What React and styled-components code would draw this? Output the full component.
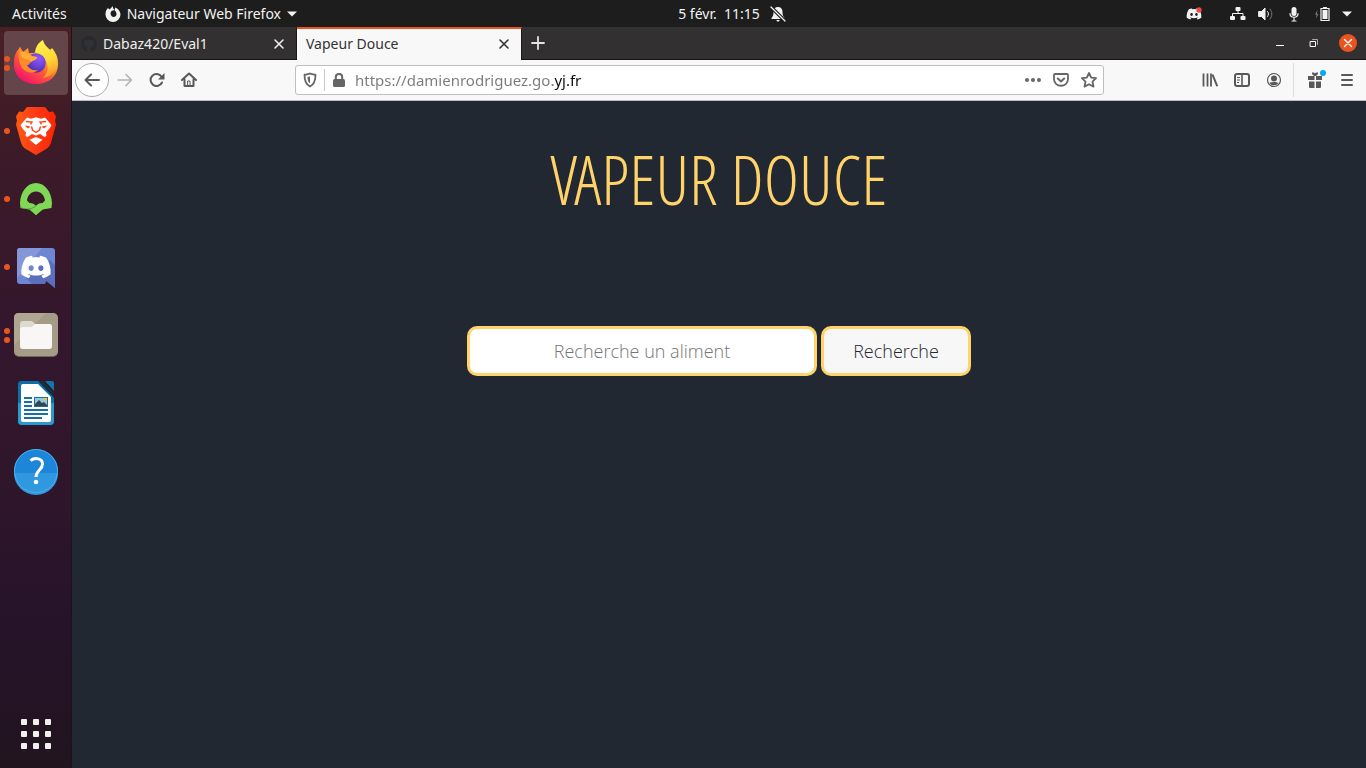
import React from "react";
import styled, { createGlobalStyle } from "styled-components";
import { FaGithub, FaDiscord } from "react-icons/fa";

const GlobalStyle = createGlobalStyle`
  * { box-sizing: border-box; }
  body { margin: 0; background: #222831; }
  body, button, input { font-family: "Noto Sans", "Open Sans", sans-serif; font-size: 14px; }
  button { border: 0; padding: 0; margin: 0; background: none; color: inherit; cursor: pointer; }
  svg { display: block; flex: none; }
`;

const Desktop = styled.div`
  display: flex;
  flex-direction: column;
  min-height: 100vh;
`;

/* ---------- system bar ---------- */
const TopBar = styled.header`
  display: grid;
  grid-template-columns: 1fr auto 1fr;
  align-items: center;
  height: 27px;
  background: #1d1d1d;
  color: #f2f2f2;
`;
const BarSide = styled.div`
  display: flex;
  align-items: center;
  gap: ${(p) => p.$gap}px;
  justify-content: ${(p) => (p.$end ? "flex-end" : "flex-start")};
  padding: 0 ${(p) => (p.$end ? 14 : 12)}px;
`;
const BarButton = styled.button`
  display: flex;
  align-items: center;
  gap: 6px;
  line-height: 27px;
  white-space: nowrap;
`;
const Clock = styled(BarButton)`
  gap: 10px;
  padding-left: 98px;
`;
const Tray = styled.span`
  margin-right: 16px;
`;

/* ---------- dock ---------- */
const Workspace = styled.div`
  display: flex;
  flex: 1;
`;
const Dock = styled.nav`
  display: flex;
  flex-direction: column;
  gap: 4px;
  flex: none;
  width: 72px;
  padding: 4px 3px 2px 4px;
  border-right: 1px solid #1a1420;
  background: linear-gradient(#4a1f24 0, #3c1a28 18%, #34172e 40%, #30162b 60%, #26132a 80%, #22141f 100%);
`;
const DockItem = styled.button`
  position: relative;
  display: flex;
  align-items: center;
  justify-content: center;
  width: 64px;
  height: 64px;
  border-radius: 4px;
  background: ${(p) => (p.$active ? "#644549" : "transparent")};
  margin-top: ${(p) => (p.$last ? "auto" : "0")};
`;
const Dots = styled.span`
  position: absolute;
  left: 0;
  top: 0;
  bottom: 0;
  display: flex;
  flex-direction: column;
  justify-content: center;
  gap: 3px;
`;
const Dot = styled.i`
  width: 6px;
  height: 6px;
  border-radius: 50%;
  background: #e95420;
`;

/* ---------- browser window ---------- */
const Browser = styled.div`
  display: flex;
  flex-direction: column;
  flex: 1;
  min-width: 0;
`;
const TabStrip = styled.div`
  display: flex;
  align-items: stretch;
  height: 33px;
  background: #333031;
  border-bottom: 1px solid #141414;
`;
const Tab = styled.div`
  display: flex;
  align-items: center;
  flex: none;
  width: 225px;
  height: ${(p) => (p.$active ? 33 : 32)}px;
  padding: 0 8px ${(p) => (p.$active ? 2 : 0)}px 9px;
  gap: 6px;
  border-top: 2px solid ${(p) => (p.$active ? "#e95420" : "#333031")};
  border-right: 1px solid #1a1a1a;
  background: ${(p) => (p.$active ? "#f8f8f8" : "#333031")};
  color: ${(p) => (p.$active ? "#333" : "#eee")};
`;
const TabTitle = styled.span`
  flex: 1;
  line-height: 20px;
  white-space: nowrap;
`;
const TabClose = styled.button`
  display: flex;
  align-items: center;
  justify-content: center;
  width: 18px;
  height: 20px;
`;
const NewTab = styled.button`
  display: flex;
  align-items: center;
  justify-content: center;
  width: 32px;
  color: #e4e4e4;
`;
const WindowButtons = styled.div`
  display: flex;
  align-items: center;
  gap: 16px;
  margin-left: auto;
  padding-right: 9px;
`;
const WindowButton = styled.button`
  display: flex;
  align-items: center;
  justify-content: center;
  width: 18px;
  height: 18px;
  border-radius: 50%;
  color: #fff;
  background: ${(p) => (p.$close ? "#e95420" : "transparent")};
`;
const Toolbar = styled.div`
  display: flex;
  align-items: center;
  height: 41px;
  padding: 0 3px;
  background: #f8f8f8;
  border-bottom: 1px solid #bdbdbf;
  color: #58585a;
`;
const ToolButton = styled.button`
  display: flex;
  align-items: center;
  justify-content: center;
  width: ${(p) => (p.$round ? 34 : 32)}px;
  height: ${(p) => (p.$round ? 34 : 32)}px;
  color: ${(p) => (p.$faded ? "#b3b3b3" : "inherit")};
  border: ${(p) => (p.$round ? "1px solid #acacac" : "0")};
  border-radius: ${(p) => (p.$round ? "50%" : "2px")};
  background: ${(p) => (p.$round ? "#fff" : "transparent")};
`;
const Divider = styled.span`
  width: 1px;
  height: 34px;
  margin: 0 5px 0 3px;
  background: #dcdcdc;
`;
const AddressBar = styled.div`
  display: flex;
  align-items: center;
  flex: 1;
  min-width: 0;
  height: 30px;
  margin: 0 90px;
  padding-left: 6px;
  border: 1px solid #bebebe;
  border-radius: 3px;
  background: #fff;
  color: #666;
`;
const AddressDivider = styled.span`
  width: 1px;
  height: 22px;
  margin: 0 6px;
  background: #c9c9c9;
`;
const AddressButton = styled.button`
  display: flex;
  align-items: center;
  justify-content: center;
  width: ${(p) => (p.$narrow ? 16 : 28)}px;
  height: 28px;
`;
const AddressInput = styled.input`
  flex: 1;
  min-width: 0;
  height: 28px;
  margin: 0 8px;
  padding: 0;
  border: 0;
  outline: 0;
  font-size: 15px;
  color: transparent;
  caret-color: #000;
  background: linear-gradient(to right, #7a7a7a 198px, #0c0c0d 198px);
  background-clip: text;
  -webkit-background-clip: text;
`;

/* ---------- web page ---------- */
const Page = styled.main`
  display: flex;
  flex-direction: column;
  align-items: center;
  flex: 1;
  padding-top: 38px;
  background: #222831;
`;
const Title = styled.h1`
  margin: 0;
  font-family: "Open Sans Condensed Light", Lato, sans-serif;
  font-size: 68px;
  font-weight: 300;
  line-height: 80px;
  color: #ffd369;
  white-space: nowrap;
`;
const SearchForm = styled.form`
  display: flex;
  gap: 4px;
  margin-top: 107px;
`;
const SearchInput = styled.input`
  width: 350px;
  height: 50px;
  padding: 0 10px;
  border: 3px solid #ffd369;
  border-radius: 10px;
  background: #fff;
  text-align: center;
  font-family: "Open Sans", sans-serif;
  font-weight: 300;
  font-size: 18px;
  color: #333;
  &::placeholder { color: #757575; opacity: 1; }
`;
const SearchButton = styled.button`
  width: 150px;
  height: 50px;
  border: 3px solid #ffd369;
  border-radius: 10px;
  background: #f7f7f7;
  font-family: "Open Sans", sans-serif;
  font-weight: 300;
  font-size: 18px;
  color: #222831;
`;

/* ---------- drawings ---------- */
const Icon = ({ size = 16, children, ...rest }) => (
  <svg width={size} height={size} viewBox="0 0 16 16" fill="none" stroke="currentColor" strokeWidth="2"
    strokeLinecap="round" strokeLinejoin="round" aria-hidden="true" {...rest}>{children}</svg>
);
const Caret = () => (
  <svg width="10" height="6" viewBox="0 0 10 6" fill="currentColor" aria-hidden="true"><path d="M0 .5h10L5 5.5z" /></svg>
);
const CloseGlyph = () => <Icon strokeWidth="1.6"><path d="M4 4l8 8M12 4l-8 8" /></Icon>;

const FirefoxLogo = () => (
  <svg width="48" height="48" viewBox="0 0 48 48" aria-hidden="true">
    <defs>
      <linearGradient id="ffBody" x1=".85" y1=".1" x2=".25" y2=".95">
        <stop offset="0" stopColor="#fff044" /><stop offset=".3" stopColor="#ffb52c" />
        <stop offset=".6" stopColor="#ff5a36" /><stop offset="1" stopColor="#f5126d" />
      </linearGradient>
      <linearGradient id="ffTail" x1=".4" y1="0" x2=".6" y2="1">
        <stop offset="0" stopColor="#fff24d" /><stop offset=".55" stopColor="#ffd835" /><stop offset="1" stopColor="#ff8f2e" />
      </linearGradient>
      <radialGradient id="ffGlobe" cx=".65" cy=".25" r=".8">
        <stop offset="0" stopColor="#9059ff" /><stop offset=".5" stopColor="#6f44d8" /><stop offset="1" stopColor="#4a2a9e" />
      </radialGradient>
    </defs>
    <path d="M4 14c1-3 3-4 4-6l3 5 5-4 1 5c3 0 5 0 7-1 2-6 4-9 7-11 1 4 4 6 7 9l2-2c4 5 6 9 6 16 0 12-9 20-22 20S2 37 2 26c0-5 0-9 2-12z" fill="url(#ffBody)" />
    <path d="M23 13c1-6 4-10 8-12 1 5 4 7 8 11 5 6 7 11 5 17-2 6-7 9-13 10 5-5 6-11 3-17-3-5-6-6-11-9z" fill="url(#ffTail)" />
    <circle cx="24" cy="24" r="9.800" fill="url(#ffGlobe)" />
    <path d="M8 8l3 5c4-1 7 1 9 4l5 1c0 3-3 3-6 5-2 1-1 3-4 3 2 4 6 6 11 5-6 5-14 2-17-4-2-5-4-12-1-19z" fill="#ff8a2a" />
    <path d="M8 13c5-1 9 1 11 4l6 1c0 3-4 3-6 5-2-3-6-3-9-4z" fill="#ffae35" />
  </svg>
);
const BraveLogo = () => (
  <svg width="48" height="48" viewBox="0 0 48 48" aria-hidden="true">
    <defs>
      <linearGradient id="braveBody" x1="0" x2="1"><stop offset="0" stopColor="#ff5a10" /><stop offset=".5" stopColor="#fb3a18" /><stop offset="1" stopColor="#ff2200" /></linearGradient>
    </defs>
    <path d="M15 0h18l4 5 4-.5 3 5-1 4 1 4-5 18q-1 4-4 6L24 48l-11-6.500q-3-2-4-6L4 17.500l1-4-1-4 3-5 4 .5z" fill="url(#braveBody)" />
    <path d="M15 10.500l4 1.200 5-1.400 5 1.400 4-1.200 6.500 7.500-1.500 3-4 4.500.5 3.500-2 1-4.500-3-4 1.500-4-1.500-4.500 3-2-1 .5-3.500-4-4.500L8.500 18z" fill="#fff" />
    <path d="M17.500 32.800L24 30l6.500 2.800L24 38z" fill="#fff" />
    <path d="M14 14.500l6 .5-1.500 2.500M34 14.500l-6 .5 1.500 2.500M19.500 19.500l1 3.500L24 25.500l3.500-2.500 1-3.500" fill="none" stroke="#fb4318" strokeWidth="1.400" />
    <path d="M12.500 18.500l6 1-2.500 2zM35.500 18.500l-6 1 2.500 2z" fill="#fb4318" />
  </svg>
);
const GreenLogo = () => (
  <svg width="48" height="48" viewBox="0 0 48 48" aria-hidden="true">
    <path fillRule="evenodd" fill="#7fd956" d="M24 8C15 8 8.500 17 8 28l.5 5 9 1.500L24 40l6.500-5.500 9-1.500.5-5C39.500 17 33 8 24 8zm0 8.500c5 0 8.500 4 9 9l-2.500 2.500c-3 0-5 1-6.500 3-1.500-2-3.500-3-6.500-3L15 25.500c.5-5 4-9 9-9z" />
    <path d="M8.500 32c6 2.500 11 2 15-1.500l4 2L24 40l-6.500-5.500-9-1.500z" fill="#58a743" />
    <path d="M24 31l4-2.500 5 5-2.500 1L24 40l-6-5.500q4-.5 6-3.500z" fill="#7fd956" />
  </svg>
);
const DiscordLogo = () => (
  <svg width="48" height="48" viewBox="0 0 48 48" aria-hidden="true">
    <path d="M8 5h32q3 0 3 3v37l-9-9-1 5H8q-3 0-3-3V8q0-3 3-3z" fill="#6f86d2" />
    <path d="M8 5h22L5 35V8q0-3 3-3z" fill="#8497d8" />
    <path d="M12 33l8 8h13l1-3 9 7V22l-5-5z" fill="#5a70bd" />
    <g transform="translate(8 8)"><FaDiscord size={32} color="#fff" /></g>
  </svg>
);
const FilesLogo = () => (
  <svg width="48" height="48" viewBox="0 0 48 48" aria-hidden="true">
    <rect x="2" y="2" width="44" height="44" rx="5" fill="#6f6758" />
    <rect x="2" y="2" width="44" height="43" rx="5" fill="#a59c87" />
    <path d="M7 2h27L2 34V7q0-5 5-5z" fill="#b0a793" />
    <path d="M8 24V13q0-3 3-3h9l3 3h14q3 0 3 3v8z" fill="#dedacd" />
    <path d="M8 19q0-3 3-3h9l3-3h14q3 0 3 3v19q0 3-3 3H11q-3 0-3-3z" fill="#f8f7f5" />
  </svg>
);
const WriterLogo = () => (
  <svg width="48" height="48" viewBox="0 0 48 48" aria-hidden="true">
    <path d="M9 2h19l14 14v26q0 4-4 4H10q-4 0-4-4V5q0-3 3-3z" fill="#0e6fa6" />
    <path d="M6 24h36v18q0 4-4 4H10q-4 0-4-4z" fill="#2b9bcf" />
    <path d="M11 5h15l13 13v23q0 2-2 2H11q-2 0-2-2V7q0-2 2-2z" fill="#fff" />
    <path d="M26 2h5l11 12v5z" fill="#152f3d" />
    <path d="M33 2h7q2 0 2 2v8z" fill="#0e78ad" />
    <path d="M12 19h8M12 23h8M12 27h8M12 31h24M12 35h24M12 39h18" stroke="#17709f" strokeWidth="2" />
    <rect x="22" y="18" width="14" height="10" fill="#17709f" />
    <rect x="23" y="19" width="12" height="8" fill="#8ec9e8" />
    <path d="M31 19h4v4z" fill="#f7c52e" />
    <path d="M23 27v-2l4-4 3 3 2-1 3 3v1z" fill="#37454c" />
  </svg>
);
const HelpLogo = () => (
  <svg width="48" height="48" viewBox="0 0 48 48" aria-hidden="true">
    <circle cx="24" cy="24" r="22" fill="#1d86d8" />
    <path d="M2 26h44a22 22 0 0 1-44 0z" fill="#2f98df" />
    <circle cx="24" cy="24" r="21.500" fill="none" stroke="#4dadea" />
    <path d="M18.500 13.500c5-3.500 12-2 12 3.500 0 6-6.500 6-6.500 13" fill="none" stroke="#fff" strokeWidth="3" />
    <circle cx="24" cy="35" r="2.300" fill="#fff" />
  </svg>
);
const GridLogo = () => (
  <svg width="32" height="32" viewBox="0 0 32 32" fill="#f2f0ee" aria-hidden="true">
    {[1, 13, 25].map((y) => [1, 13, 25].map((x) => <rect key={x + "-" + y} x={x} y={y} width="6" height="6" rx="1" />))}
  </svg>
);

const DOCK = [
  { label: "Firefox", logo: <FirefoxLogo />, dots: 2, active: true },
  { label: "Brave", logo: <BraveLogo />, dots: 1 },
  { label: "Android Studio", logo: <GreenLogo />, dots: 1 },
  { label: "Discord", logo: <DiscordLogo />, dots: 1 },
  { label: "Fichiers", logo: <FilesLogo />, dots: 2 },
  { label: "LibreOffice Writer", logo: <WriterLogo />, dots: 0 },
  { label: "Aide", logo: <HelpLogo />, dots: 0 },
];

const SystemBar = () => (
  <TopBar>
    <BarSide $gap={38}>
      <BarButton>Activités</BarButton>
      <BarButton>
        <Icon stroke="none" fill="currentColor">
          <path d="M3 2l1.500 1.500L8 0c-.5 2 .5 3 2 4-2 0-2.500 1-3.500 1l-1 2c0 5 6 5 6 1 0-1.500-1-2.500-1.500-3.500V1.500c3 1 5.500 4 5.500 7A7.500 7.500 0 0 1 .5 8.500C.5 6 1 4 3 2z" />
        </Icon>
        Navigateur Web Firefox
        <Caret />
      </BarButton>
    </BarSide>
    <Clock>
      <span>5 févr.&nbsp; 11:15</span>
      <Icon stroke="none" fill="currentColor">
        <path d="M8 1c3 0 4.500 2 4.500 5s.5 4 2 6v1h-13v-1c1.500-2 2-3 2-6S5 1 8 1zM6 14h4l-2 2z" />
        <path d="M1 1l14 14" stroke="#1d1d1d" strokeWidth="3.500" />
        <path d="M1 1l14 14" stroke="currentColor" strokeWidth="1.300" />
      </Icon>
    </Clock>
    <BarSide $end $gap={12}>
      <Tray>
        <svg width="16" height="16" viewBox="0 0 16 16" aria-hidden="true">
          <FaDiscord size={16} color="#f2f2f2" />
          <circle cx="13" cy="4" r="2.700" fill="#f04747" />
        </svg>
      </Tray>
      <Icon stroke="none" fill="currentColor">
        <rect x="5.500" y="1" width="5" height="4" rx="1" /><rect x="0" y="10" width="5" height="4" rx="1" /><rect x="10.500" y="10" width="5" height="4" rx="1" />
        <path d="M8 5v2.500M2.500 10V7.500h10.500V10" fill="none" stroke="currentColor" strokeWidth="1" />
      </Icon>
      <Icon strokeWidth="1">
        <path d="M1 5.500h2.500L7 2v12l-3.500-3.500H1z" fill="currentColor" />
        <path d="M9.500 5.500c1.300 1.500 1.300 3.500 0 5" /><path d="M12 3c2.500 3 2.500 7 0 10" stroke="#777" />
      </Icon>
      <Icon strokeWidth="1.200">
        <rect x="5.500" y="1" width="5" height="9" rx="2.500" fill="currentColor" stroke="none" />
        <path d="M4 7.500c0 5 8 5 8 0M8 12v3M6 15h4" />
      </Icon>
      <Icon strokeWidth="1.200" strokeLinejoin="miter">
        <path d="M7 2.500h8v12H7zM9.500 1.500h3" /><rect x="8.500" y="4" width="5" height="9" fill="currentColor" stroke="none" />
        <path d="M3.500 4L1 8.500h1.500L2 12.500 4.500 8H3z" fill="#777" stroke="none" />
      </Icon>
      <Caret />
    </BarSide>
  </TopBar>
);

const BrowserTabs = () => (
  <TabStrip>
    <Tab>
      <FaGithub size={16} color="#252a30" />
      <TabTitle>Dabaz420/Eval1</TabTitle>
      <TabClose aria-label="Fermer l’onglet"><CloseGlyph /></TabClose>
    </Tab>
    <Tab $active>
      <TabTitle>Vapeur Douce</TabTitle>
      <TabClose aria-label="Fermer l’onglet"><CloseGlyph /></TabClose>
    </Tab>
    <NewTab aria-label="Nouvel onglet"><Icon strokeWidth="1.800"><path d="M8 2v12M2 8h12" /></Icon></NewTab>
    <WindowButtons>
      <WindowButton aria-label="Réduire"><Icon strokeWidth="1"><path d="M4.500 10.500h7" /></Icon></WindowButton>
      <WindowButton aria-label="Restaurer">
        <Icon strokeWidth="1" strokeLinejoin="miter"><path d="M4.500 6.500h5v5h-5z" /><path d="M6.500 4.500h5v5" stroke="#aaa" /></Icon>
      </WindowButton>
      <WindowButton $close aria-label="Fermer"><Icon strokeWidth="1.400"><path d="M4.500 4.500l7 7M11.500 4.500l-7 7" /></Icon></WindowButton>
    </WindowButtons>
  </TabStrip>
);

const NavigationBar = () => (
  <Toolbar>
    <ToolButton $round aria-label="Précédent"><Icon><path d="M15 8H1.500M7 2.500L1.500 8 7 13.500" /></Icon></ToolButton>
    <ToolButton $faded aria-label="Suivant"><Icon strokeWidth="1.600"><path d="M1 8h13.500M9 2.500L14.500 8 9 13.500" /></Icon></ToolButton>
    <ToolButton aria-label="Actualiser"><Icon><path d="M13 10.500A6 6 0 1 1 12.500 4.500" /><path d="M15.500 1v6.500H9z" fill="currentColor" stroke="none" /></Icon></ToolButton>
    <ToolButton aria-label="Accueil"><Icon><path d="M1 8l7-6.500L15 8M3.500 7.500V14h9V7.500" /><path d="M7 9h2v5H7z" strokeWidth="1" /></Icon></ToolButton>
    <AddressBar>
      <AddressButton $narrow aria-label="Protection">
        <Icon strokeWidth="1.800"><path d="M8 1.500c2 1 4 1 5.500 1.200C13.500 9 12 12.500 8 14.500 4 12.500 2.500 9 2.500 2.700 4 2.500 6 2.500 8 1.500z" /><path d="M8 4.500v7C6 10 5.500 8 5.500 5z" fill="currentColor" stroke="none" /></Icon>
      </AddressButton>
      <AddressDivider />
      <AddressButton $narrow aria-label="Connexion sécurisée">
        <Icon><rect x="2" y="7" width="12" height="8" rx="1.500" fill="currentColor" stroke="none" /><path d="M4.800 8V5c0-4 6.400-4 6.400 0v3" /></Icon>
      </AddressButton>
      <AddressInput aria-label="Adresse" defaultValue="https://damienrodriguez.go.yj.fr" />
      <AddressButton aria-label="Actions"><Icon stroke="none" fill="currentColor"><circle cx="2" cy="8" r="2" /><circle cx="8" cy="8" r="2" /><circle cx="14" cy="8" r="2" /></Icon></AddressButton>
      <AddressButton aria-label="Pocket"><Icon><path d="M2 2h12q1 0 1 1v4c0 9-14 9-14 0V3q0-1 1-1z" strokeWidth="1.800" /><path d="M4.800 6.500L8 9.500l3.200-3" /></Icon></AddressButton>
      <AddressButton aria-label="Marquer cette page"><Icon strokeWidth="1.800"><path d="M8 1l2.200 4.600 4.900.6-3.600 3.400 1 5L8 12.200l-4.500 2.400 1-5L.9 6.200l4.900-.6z" /></Icon></AddressButton>
    </AddressBar>
    <ToolButton aria-label="Bibliothèque"><Icon strokeLinecap="butt"><path d="M1.500 1.500v13M5.500 1.500v13M9 1.500v13" strokeWidth="1.800" /><path d="M10.500 2.500l4.700 11.700" /></Icon></ToolButton>
    <ToolButton aria-label="Panneaux"><Icon><rect x="1" y="2" width="14" height="12" rx="2" /><path d="M8 2v12" strokeWidth="1.600" /><path d="M3 5.500h3M3 8h3M3 10.500h2" strokeWidth="1" strokeLinecap="butt" /></Icon></ToolButton>
    <ToolButton aria-label="Compte"><Icon strokeWidth="1.200"><circle cx="8" cy="8" r="6.500" /><circle cx="8" cy="6.500" r="3" fill="currentColor" stroke="none" /><path d="M3.500 11c2-1.500 7-1.500 9 0-2 3-7 3-9 0z" fill="currentColor" stroke="none" /></Icon></ToolButton>
    <Divider />
    <ToolButton aria-label="Nouveautés">
      <svg width="22" height="20" viewBox="0 0 22 20" fill="currentColor" aria-hidden="true">
        <path d="M4 6h6.500v4H4zM12 6h6v4h-6zM5 11.500h5.500V18H6q-1 0-1-1zM12 11.500h5V17q0 1-1 1h-4zM8 2.500h2l1 1 1-1h2V4l-2 2h-2L8 4z" />
        <circle cx="19" cy="3" r="3" fill="#00a8f5" />
      </svg>
    </ToolButton>
    <ToolButton aria-label="Menu"><Icon><path d="M3 3h10M3 8h10M3 13h10" /></Icon></ToolButton>
  </Toolbar>
);

export default function App() {
  return (
    <Desktop>
      <GlobalStyle />
      <SystemBar />
      <Workspace>
        <Dock>
          {DOCK.map((d) => (
            <DockItem key={d.label} $active={d.active} aria-label={d.label}>
              <Dots>{Array.from({ length: d.dots }, (_, i) => <Dot key={i} />)}</Dots>
              {d.logo}
            </DockItem>
          ))}
          <DockItem $last aria-label="Applications"><GridLogo /></DockItem>
        </Dock>
        <Browser>
          <BrowserTabs />
          <NavigationBar />
          <Page>
            <Title>VAPEUR DOUCE</Title>
            <SearchForm onSubmit={(e) => e.preventDefault()}>
              <SearchInput aria-label="Recherche un aliment" placeholder="Recherche un aliment" />
              <SearchButton type="submit">Recherche</SearchButton>
            </SearchForm>
          </Page>
        </Browser>
      </Workspace>
    </Desktop>
  );
}
